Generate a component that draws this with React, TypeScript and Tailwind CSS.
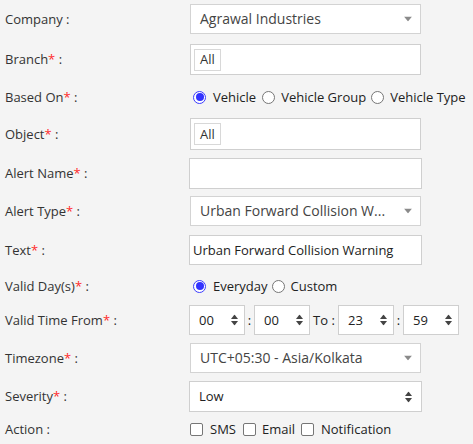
import React from "react";

const Req = () => <span className="text-[#ff2a2a]">*</span>;

function Label({ text, req }: { text: string; req?: boolean }) {
  return (
    <div className="w-[189px] shrink-0 pl-[5px] text-[#333]">
      {text}
      {req && <Req />} :
    </div>
  );
}

function SelectArrow() {
  return (
    <svg width="8" height="5" viewBox="0 0 8 5" className="absolute right-[8px] top-1/2 -translate-y-1/2">
      <path d="M0 0 H8 L4 5 Z" fill="#8a8a8a" />
    </svg>
  );
}

function Spinner({ className = "" }: { className?: string }) {
  return (
    <svg width="7" height="11" viewBox="0 0 7 11" className={className}>
      <path d="M0 4.5 L3.5 0 L7 4.5 Z" fill="#444" />
      <path d="M0 6.5 L3.5 11 L7 6.5 Z" fill="#444" />
    </svg>
  );
}

function Radio({ checked }: { checked?: boolean }) {
  return checked ? (
    <span className="w-[13px] h-[13px] rounded-full border border-[#3b3bff] bg-white flex items-center justify-center shrink-0">
      <span className="block w-[8px] h-[8px] rounded-full bg-[#3333ff]" />
    </span>
  ) : (
    <span className="block w-[13px] h-[13px] rounded-full border border-[#767676] bg-white shrink-0" />
  );
}

function Checkbox() {
  return <span className="block w-[13px] h-[13px] rounded-[2px] border border-[#767676] bg-white shrink-0" />;
}

function TimeBox({ v }: { v: string }) {
  return (
    <div className="relative w-[56px] h-full border border-[#cfcfcf] bg-white flex items-center pl-[9px] text-[#222]">
      {v}
      <Spinner className="absolute right-[6px] top-1/2 -translate-y-1/2" />
    </div>
  );
}

function Select({ text }: { text: string }) {
  return (
    <div className="relative ml-[1px] w-[231px] h-full border border-[#d3d3d3] bg-white flex items-center pl-[9px] text-[14px] text-[#444]">
      {text}
      <SelectArrow />
    </div>
  );
}

export default function App() {
  return (
    <div
      className="w-[473px] h-[444px] bg-[#f4f4f4] text-[13px] leading-none overflow-hidden"
      style={{ fontFamily: '"Open Sans", "Noto Sans", sans-serif' }}
    >
      <div className="flex flex-col pt-[4px]">
        {/* Company */}
        <div className="flex items-center h-[30px]">
          <Label text="Company" />
          <Select text="Agrawal Industries" />
        </div>
        {/* Branch */}
        <div className="flex items-center h-[31px] mt-[10px]">
          <Label text="Branch" req />
          <div className="ml-[1px] w-[231px] h-full border border-[#cfcfcf] bg-white flex items-center pl-[3px]">
            <span className="h-[22px] px-[5px] border border-[#d8d8d8] flex items-center text-[#333]">All</span>
          </div>
        </div>
        {/* Based On */}
        <div className="flex items-center h-[20px] mt-[12px]">
          <Label text="Based On" req />
          <div className="flex items-center text-[#222]">
            <span className="ml-[4px]"><Radio checked /></span>
            <span className="ml-[7px]">Vehicle</span>
            <span className="ml-[6px]"><Radio /></span>
            <span className="ml-[6px]">Vehicle Group</span>
            <span className="ml-[5px]"><Radio /></span>
            <span className="ml-[6px]">Vehicle Type</span>
          </div>
        </div>
        {/* Object */}
        <div className="flex items-center h-[32px] mt-[11px]">
          <Label text="Object" req />
          <div className="ml-[1px] w-[231px] h-full border border-[#cfcfcf] bg-white flex items-center pl-[3px]">
            <span className="h-[22px] px-[5px] border border-[#d8d8d8] flex items-center text-[#333]">All</span>
          </div>
        </div>
        {/* Alert Name */}
        <div className="flex items-center h-[31px] mt-[8px]">
          <Label text="Alert Name" req />
          <div className="w-[233px] h-full border border-[#cfcfcf] bg-white" />
        </div>
        {/* Alert Type */}
        <div className="flex items-center h-[30px] mt-[7px]">
          <Label text="Alert Type" req />
          <Select text="Urban Forward Collision W..." />
        </div>
        {/* Text */}
        <div className="flex items-center h-[30px] mt-[9px]">
          <Label text="Text" req />
          <div className="w-[233px] h-full border border-[#cfcfcf] bg-white flex items-center pl-[3px] text-[#222]">
            Urban Forward Collision Warning
          </div>
        </div>
        {/* Valid Days */}
        <div className="flex items-center h-[20px] mt-[11px]">
          <Label text="Valid Day(s)" req />
          <div className="flex items-center text-[#222]">
            <span className="ml-[4px]"><Radio checked /></span>
            <span className="ml-[7px]">Everyday</span>
            <span className="ml-[4px]"><Radio /></span>
            <span className="ml-[6px]">Custom</span>
          </div>
        </div>
        {/* Valid Time */}
        <div className="flex items-center h-[30px] mt-[9px]">
          <Label text="Valid Time From" req />
          <div className="flex items-center h-full text-[#222]">
            <TimeBox v="00" />
            <span className="w-[9px] text-center">:</span>
            <TimeBox v="00" />
            <span className="w-[28px] text-center">To :</span>
            <TimeBox v="23" />
            <span className="w-[9px] text-center">:</span>
            <TimeBox v="59" />
          </div>
        </div>
        {/* Timezone */}
        <div className="flex items-center h-[30px] mt-[8px]">
          <Label text="Timezone" req />
          <Select text="UTC+05:30 - Asia/Kolkata" />
        </div>
        {/* Severity */}
        <div className="flex items-center h-[31px] mt-[8px]">
          <Label text="Severity" req />
          <div className="relative w-[233px] h-full border border-[#cfcfcf] bg-white flex items-center pl-[9px] text-[#222]">
            Low
            <Spinner className="absolute right-[9px] top-1/2 -translate-y-1/2" />
          </div>
        </div>
        {/* Action */}
        <div className="flex items-center h-[20px] mt-[7px]">
          <Label text="Action" />
          <div className="flex items-center text-[#222]">
            <span className="ml-[1px]"><Checkbox /></span>
            <span className="ml-[7px]">SMS</span>
            <span className="ml-[7px]"><Checkbox /></span>
            <span className="ml-[6px]">Email</span>
            <span className="ml-[6px]"><Checkbox /></span>
            <span className="ml-[7px]">Notification</span>
          </div>
        </div>
      </div>
    </div>
  );
}
